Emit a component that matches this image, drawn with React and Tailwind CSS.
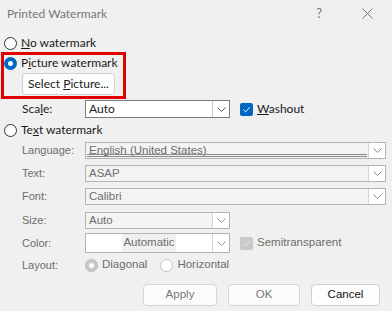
import React from "react";

const ui = { fontFamily: 'Lato, "Noto Sans", sans-serif' };
const tah = { fontFamily: '"Liberation Sans", Arial, sans-serif' };

function Radio({ checked, disabled }) {
  if (disabled && checked) {
    return (
      <span className="flex h-[13px] w-[13px] shrink-0 items-center justify-center rounded-full border border-[#bcbcbc] bg-[#c8c8c8]">
        <span className="h-[5px] w-[5px] rounded-full bg-white" />
      </span>
    );
  }
  if (disabled) {
    return <span className="h-[13px] w-[13px] shrink-0 rounded-full border border-[#c4c4c4] bg-white" />;
  }
  if (checked) {
    return (
      <span className="flex h-[13px] w-[13px] shrink-0 items-center justify-center rounded-full bg-[#0067c0]">
        <span className="h-[5px] w-[5px] rounded-full bg-white" />
      </span>
    );
  }
  return <span className="h-[13px] w-[13px] shrink-0 rounded-full border border-[#333] bg-white" />;
}

function Check({ disabled }) {
  return (
    <span
      className={
        "flex h-[13px] w-[13px] shrink-0 items-center justify-center rounded-[2px] " +
        (disabled ? "bg-[#c9c9c9]" : "bg-[#0067c0]")
      }
    >
      <svg width="9" height="9" viewBox="0 0 9 9">
        <path d="M1.5 4.8 L3.6 6.8 L7.6 2.4" fill="none" stroke={disabled ? "#eeeeee" : "#ffffff"} strokeWidth="1" />
      </svg>
    </span>
  );
}

function Arrow({ disabled }) {
  return (
    <span
      className={
        "flex h-full w-[17px] shrink-0 items-center justify-center border-l bg-white " +
        (disabled ? "border-[#d4d4d4]" : "border-[#c8c8c8]")
      }
    >
      <svg width="9" height="5" viewBox="0 0 9 5">
        <path d="M0.5 0.5 L4.5 4.5 L8.5 0.5" fill="none" stroke={disabled ? "#8a8a8a" : "#555"} strokeWidth="1" />
      </svg>
    </span>
  );
}

function Label({ children }) {
  return (
    <span className="w-[63px] shrink-0 text-[11px] text-[#6d6d6d]" style={tah}>
      {children}
    </span>
  );
}

function Combo({ width, children }) {
  return (
    <div className={"flex h-[17px] items-center border border-[#b4b4b4] bg-[#f3f3f3] " + width}>
      <span className="flex-1 whitespace-nowrap pl-[3px] text-[11.5px] text-[#6d6d6d]" style={tah}>
        {children}
      </span>
      <Arrow disabled />
    </div>
  );
}

export default function App() {
  return (
    <div className="h-[311px] w-[392px] overflow-hidden bg-[#f0f0f0] text-[12px] text-[#1a1a1a]" style={ui}>
      <div className="flex h-[27px] items-center pl-[7px]">
        <span className="text-[12px] text-[#777]">Printed Watermark</span>
        <span className="ml-auto mr-[40px] text-[13px] text-[#777]">?</span>
        <svg width="11" height="11" viewBox="0 0 11 11" className="mr-[19px]">
          <path d="M0.5 0.5 L10.5 10.5 M10.5 0.5 L0.5 10.5" stroke="#777" strokeWidth="1" />
        </svg>
      </div>

      <div className="mt-[9px] flex h-[14px] items-center gap-[4px] whitespace-nowrap pl-[4px]">
        <Radio />
        <span>
          <u>N</u>o watermark
        </span>
      </div>

      <div className="ml-[1px] mt-[2px] h-[47px] w-[125px] border-[3px] border-[#e00000]">
        <div className="mt-[1px] flex h-[14px] items-center gap-[4px] whitespace-nowrap">
          <Radio checked />
          <span>
            P<u>i</u>cture watermark
          </span>
        </div>
        <button className="ml-[18px] mt-[3px] flex h-[22px] w-[93px] items-center justify-center whitespace-nowrap rounded-[4px] border border-[#d0d0d0] bg-[#fdfdfd] text-[12px]">
          Select&nbsp;<u>P</u>icture...
        </button>
      </div>

      <div className="mt-[1px] flex h-[18px] items-center pl-[22px]">
        <span className="w-[63px]">
          Sca<u>l</u>e:
        </span>
        <div className="flex h-[18px] w-[145px] items-center border border-[#7a7a7a] bg-white">
          <span className="flex-1 pl-[3px]">Auto</span>
          <Arrow />
        </div>
        <span className="ml-[10px] flex items-center gap-[4px]">
          <Check />
          <span>
            <u>W</u>ashout
          </span>
        </span>
      </div>

      <div className="mt-[5px] flex h-[14px] items-center gap-[4px] whitespace-nowrap pl-[4px]">
        <Radio />
        <span>
          Te<u>x</u>t watermark
        </span>
      </div>

      <div className="mt-[5px] flex h-[17px] items-center pl-[22px]">
        <Label>Language:</Label>
        <div className="flex h-[17px] w-[301px] items-center border border-[#b4b4b4] bg-[#f3f3f3]">
          <span className="relative h-full flex-1 pl-[3px] text-[11.5px] leading-[14px] text-[#6d6d6d]" style={tah}>
            English (United States)
            <span className="absolute bottom-[1px] left-[1px] right-[1px] h-[3px] border-y border-[#8a8a8a]" />
          </span>
          <Arrow disabled />
        </div>
      </div>

      <div className="mt-[6px] flex h-[17px] items-center pl-[22px]">
        <Label>Text:</Label>
        <Combo width="w-[301px]">ASAP</Combo>
      </div>

      <div className="mt-[6px] flex h-[17px] items-center pl-[22px]">
        <Label>Font:</Label>
        <Combo width="w-[301px]">Calibri</Combo>
      </div>

      <div className="mt-[7px] flex h-[17px] items-center pl-[22px]">
        <Label>Size:</Label>
        <Combo width="w-[145px]">Auto</Combo>
      </div>

      <div className="mt-[4px] flex h-[20px] items-center pl-[22px]">
        <Label>Color:</Label>
        <div className="flex h-[20px] w-[145px] items-center border border-[#b4b4b4] bg-white">
          <span className="flex flex-1 justify-center">
            <span className="bg-[#f0f0f0] px-[1px] text-[11.5px] text-[#6d6d6d]" style={tah}>
              Automatic
            </span>
          </span>
          <Arrow disabled />
        </div>
        <span className="ml-[10px] flex items-center gap-[4px]">
          <Check disabled />
          <span className="text-[11.5px] text-[#6d6d6d]" style={tah}>
            Semitransparent
          </span>
        </span>
      </div>

      <div className="mt-[5px] flex h-[14px] items-center pl-[22px]">
        <Label>Layout:</Label>
        <span className="flex items-center gap-[4px]">
          <Radio checked disabled />
          <span className="text-[11.5px] text-[#6d6d6d]" style={tah}>
            Diagonal
          </span>
        </span>
        <span className="ml-[13px] flex items-center gap-[4px]">
          <Radio disabled />
          <span className="text-[11.5px] text-[#6d6d6d]" style={tah}>
            Horizontal
          </span>
        </span>
      </div>

      <div className="mt-[12px] flex h-[22px] pl-[143px]">
        <button className="flex h-[22px] w-[74px] items-center justify-center rounded-[4px] border border-[#d6d6d6] bg-[#fbfbfb] text-[11.5px] text-[#777]" style={tah}>
          Apply
        </button>
        <button className="ml-[11px] flex h-[22px] w-[72px] items-center justify-center rounded-[4px] border border-[#d6d6d6] bg-[#fbfbfb] text-[11.5px] text-[#777]" style={tah}>
          OK
        </button>
        <button className="ml-[11px] flex h-[22px] w-[69px] items-center justify-center rounded-[4px] border border-[#cfcfcf] bg-[#fdfdfd] text-[11.5px] text-[#111]" style={tah}>
          Cancel
        </button>
      </div>
    </div>
  );
}
